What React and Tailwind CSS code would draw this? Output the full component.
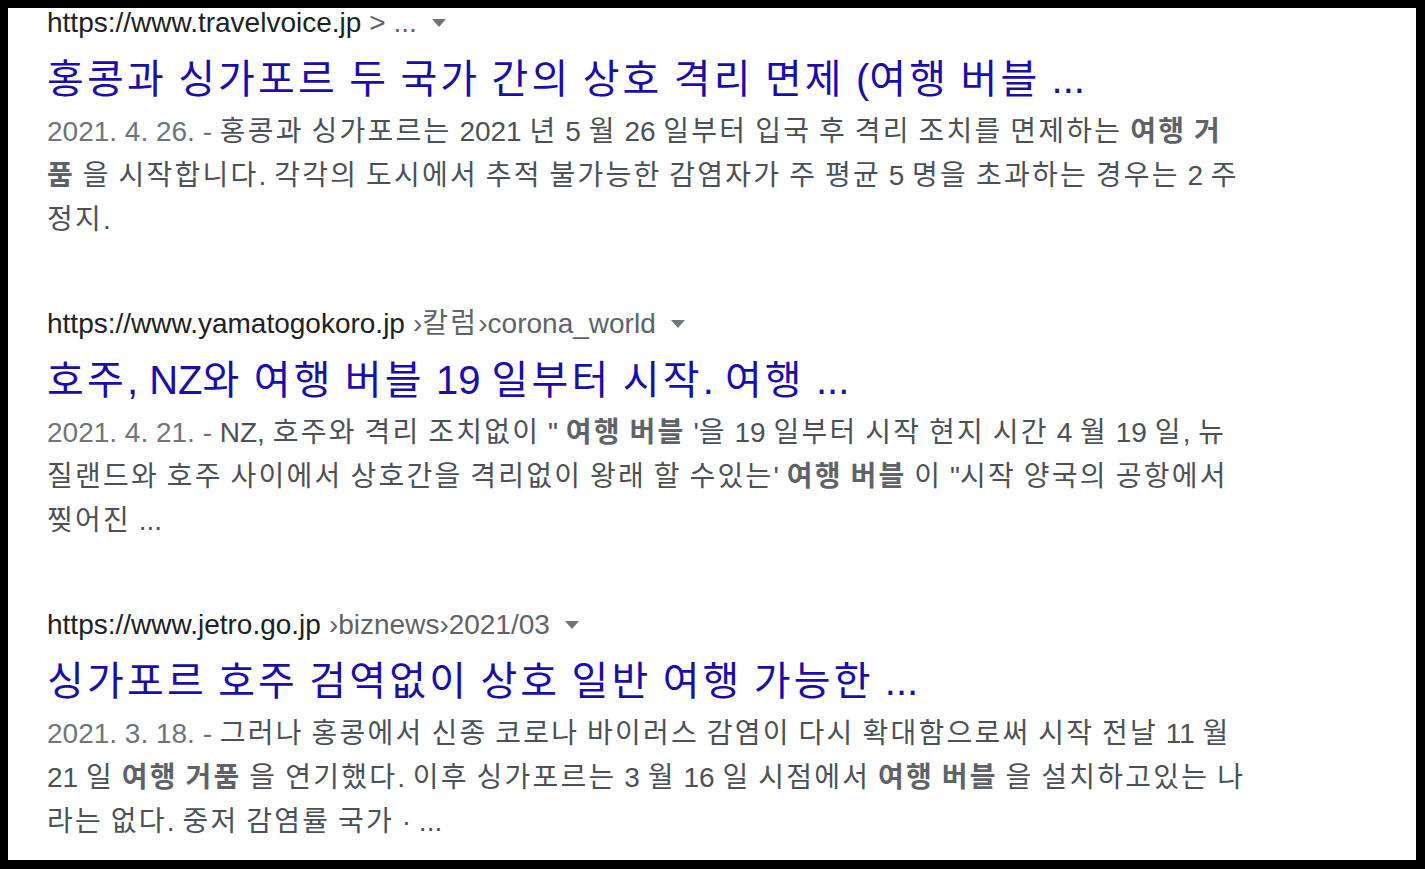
import React from 'react';

const results = [
    {
        url: 'https://www.travelvoice.jp',
        crumbs: '> ...',
        title: '홍콩과 싱가포르 두 국가 간의 상호 격리 면제 (여행 버블 ...',
        date: '2021. 4. 26. - ',
        lines: [
            ['홍콩과 싱가포르는 2021 년 5 월 26 일부터 입국 후 격리 조치를 면제하는 ', { b: '여행 거' }],
            [{ b: '품' }, ' 을 시작합니다. 각각의 도시에서 추적 불가능한 감염자가 주 평균 5 명을 초과하는 경우는 2 주'],
            ['정지.'],
        ],
    },
    {
        url: 'https://www.yamatogokoro.jp',
        crumbs: '›칼럼›corona_world',
        title: '호주, NZ와 여행 버블 19 일부터 시작. 여행 ...',
        date: '2021. 4. 21. - ',
        lines: [
            ['NZ, 호주와 격리 조치없이 " ', { b: '여행 버블' }, " '을 19 일부터 시작 현지 시간 4 월 19 일, 뉴"],
            ["질랜드와 호주 사이에서 상호간을 격리없이 왕래 할 수있는' ", { b: '여행 버블' }, ' 이 "시작 양국의 공항에서'],
            ['찢어진 ...'],
        ],
    },
    {
        url: 'https://www.jetro.go.jp',
        crumbs: '›biznews›2021/03',
        title: '싱가포르 호주 검역없이 상호 일반 여행 가능한 ...',
        date: '2021. 3. 18. - ',
        lines: [
            ['그러나 홍콩에서 신종 코로나 바이러스 감염이 다시 확대함으로써 시작 전날 11 월'],
            ['21 일 ', { b: '여행 거품' }, ' 을 연기했다. 이후 싱가포르는 3 월 16 일 시점에서 ', { b: '여행 버블' }, ' 을 설치하고있는 나'],
            ['라는 없다. 중저 감염률 국가 · ...'],
        ],
    },
];

// Hangul here renders a bit narrower than in the original font, so pad it out
const Ko = ({ text }) =>
    text.split(/([\uac00-\ud7a3]+)/).map((chunk, i) =>
        /[\uac00-\ud7a3]/.test(chunk)
            ? <span key={i} className="tracking-[0.08em]">{chunk}</span>
            : chunk
    );

const Caret = () => (
    <svg width="14" height="8" viewBox="0 0 14 8" className="ml-[15px] inline-block">
        <path d="M0 0 L14 0 L7 8 Z" fill="#70757a" />
    </svg>
);

const Result = ({ url, crumbs, title, date, lines }) => (
    <div className="mb-[68px]">
        <div className="flex items-center h-[28px] leading-[28px] text-[28px] whitespace-nowrap">
            <span className="text-[#202124]">{url}</span>
            <span className="ml-[8px] text-[#5f6368]"><Ko text={crumbs} /></span>
            <Caret />
        </div>
        <h3 className="mt-[16px] text-[40px] leading-[52px] text-[#1a0dab] whitespace-nowrap">
            <Ko text={title} />
        </h3>
        <div className="mt-[5px] text-[28px] leading-[44px] text-[#4d5156] whitespace-nowrap">
            {lines.map((line, i) => (
                <div key={i}>
                    {i === 0 && <span className="text-[#70757a]">{date}</span>}
                    {line.map((part, j) =>
                        typeof part === 'string'
                            ? <span key={j}><Ko text={part} /></span>
                            : <b key={j} className="font-bold text-[#5f6368]"><Ko text={part.b} /></b>
                    )}
                </div>
            ))}
        </div>
    </div>
);

export default function App() {
    return (
        <div
            className="w-[1425px] h-[869px] bg-black pt-[8px] pl-[8px] pr-[9px] pb-[9px] overflow-hidden"
            style={{ fontFamily: '"Liberation Sans", "Noto Sans CJK KR", Arial, sans-serif' }}
        >
            <div className="w-full h-full bg-white pt-[1px] pl-[39px] overflow-hidden">
                {results.map((r) => (
                    <Result key={r.url} {...r} />
                ))}
            </div>
        </div>
    );
}
